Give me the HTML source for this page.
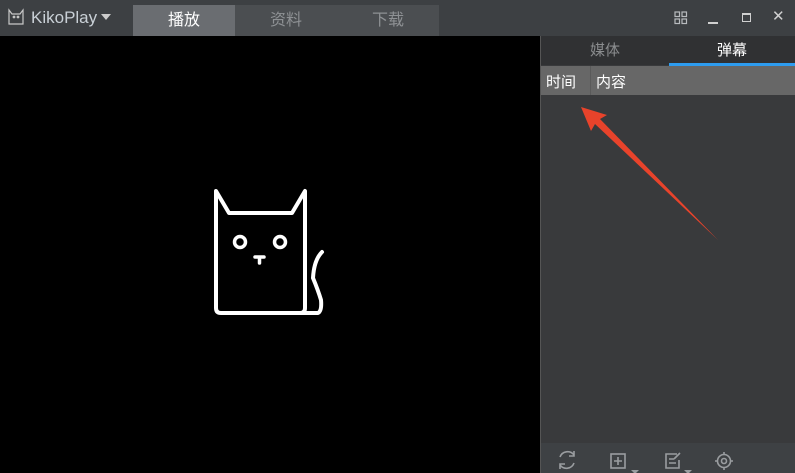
<!DOCTYPE html>
<html><head><meta charset="utf-8"><style>
*{margin:0;padding:0;box-sizing:border-box}
body{width:795px;height:473px;overflow:hidden;background:#000;font-family:"Liberation Sans","Noto Sans CJK SC",sans-serif;position:relative}
.abs{position:absolute}
</style></head><body>
<div class="abs" style="left:0;top:0;width:795px;height:36px;background:#3d4043"></div>
<svg class="abs" style="left:7px;top:8px" width="18" height="18" viewBox="0 0 18 18" fill="none" stroke="#c8c8c8" stroke-width="1.2"><path d="M2 2 L5 6 H13 L16 2 V16 H2 Z"/><circle cx="7" cy="9" r="0.8"/><circle cx="11" cy="9" r="0.8"/></svg>
<div class="abs" style="left:31px;top:8px;font-size:17px;color:#c9d0d6">KikoPlay</div>
<div class="abs" style="left:101px;top:14px;width:0;height:0;border-left:5px solid transparent;border-right:5px solid transparent;border-top:6px solid #ccc"></div>
<div class="abs" style="left:133px;top:5px;width:102px;height:31px;background:#6a6d71;color:#fff;font-size:16px;text-align:center;line-height:31px">播放</div>
<div class="abs" style="left:235px;top:5px;width:102px;height:31px;background:#4b4e51;color:#8e9194;font-size:16px;text-align:center;line-height:31px">资料</div>
<div class="abs" style="left:337px;top:5px;width:102px;height:31px;background:#4b4e51;color:#8e9194;font-size:16px;text-align:center;line-height:31px">下载</div>
<svg class="abs" style="left:673px;top:10px" width="16" height="16" fill="none" stroke="#b8bbbe" stroke-width="1.2"><rect x="2" y="2" width="4.5" height="4.5"/><rect x="9" y="2" width="4.5" height="4.5"/><rect x="2" y="9" width="4.5" height="4.5"/><rect x="9" y="9" width="4.5" height="4.5"/></svg>
<div class="abs" style="left:708px;top:22px;width:10px;height:2px;background:#d0d0d0"></div>
<div class="abs" style="left:742px;top:13px;width:9px;height:9px;border:1.5px solid #d0d0d0;border-top-width:2.5px"></div>
<div class="abs" style="left:772px;top:7px;color:#d0d0d0;font-size:15px">✕</div>
<svg class="abs" style="left:0;top:0" width="540" height="473" fill="none" stroke="#fff" stroke-width="4" stroke-linejoin="round" stroke-linecap="round">
<path d="M216 191 L229 213 H292 L305 191 V308 Q305 313 300 313 H221 Q216 313 216 308 Z"/>
<path d="M300 313 H318 Q322 311 321 300 Q318 290 313 278 Q314 260 322 252"/>
<circle cx="240" cy="242" r="5.5" stroke-width="3.5"/><circle cx="280" cy="242" r="5.5" stroke-width="3.5"/>
<path d="M255 257 H264 M259.5 257 V263" stroke-width="3.5"/>
</svg>
<div class="abs" style="left:540px;top:36px;width:255px;height:437px;background:#393a3c;border-left:1px solid #555"></div>
<div class="abs" style="left:541px;top:36px;width:254px;height:29px;background:#303133"></div>
<div class="abs" style="left:541px;top:36px;width:128px;height:29px;color:#8a8c8e;font-size:15px;text-align:center;line-height:29px">媒体</div>
<div class="abs" style="left:669px;top:36px;width:126px;height:29px;color:#fff;font-size:15px;text-align:center;line-height:29px">弹幕</div>
<div class="abs" style="left:669px;top:63px;width:126px;height:3px;background:#2d9cf0"></div>
<div class="abs" style="left:541px;top:66px;width:254px;height:29px;background:#676767"></div>
<div class="abs" style="left:590px;top:66px;width:1px;height:29px;background:#5a5a5a"></div>
<div class="abs" style="left:546px;top:71px;color:#fff;font-size:15px">时间</div>
<div class="abs" style="left:596px;top:71px;color:#fff;font-size:15px">内容</div>
<div class="abs" style="left:541px;top:443px;width:254px;height:30px;background:#3e4144"></div>
<svg class="abs" style="left:541px;top:443px" width="254" height="30" fill="none" stroke="#9a9da0" stroke-width="1.6">
<path d="M33 12 A8 8 0 0 0 19 14 M19 22 A8 8 0 0 0 33 20"/><path d="M33 8 V13 H28 M19 26 V21 H24"/>
<rect x="70" y="11" width="14" height="14"/><path d="M77 14 V22 M73 18 H81"/>
<path d="M90 27 L98 27 L94 31Z" fill="#9a9da0" stroke="none"/>
<path d="M136 11 H125 V25 H138 V17 M128 16 H133 M128 20 H135 M139 10 L133 16"/>
<path d="M143 27 L151 27 L147 31Z" fill="#9a9da0" stroke="none"/>
<circle cx="183" cy="18" r="6.5"/><circle cx="183" cy="18" r="2.5"/><path d="M183 9 V11.5 M183 24.5 V27 M174 18 H176.5 M189.5 18 H192"/>
</svg>
<svg class="abs" style="left:0;top:0" width="795" height="473"><path d="M581 107 L607 115 L600 119 L718 240 L595 124 L591 131 Z" fill="#e8432b"/></svg>
</body></html>
